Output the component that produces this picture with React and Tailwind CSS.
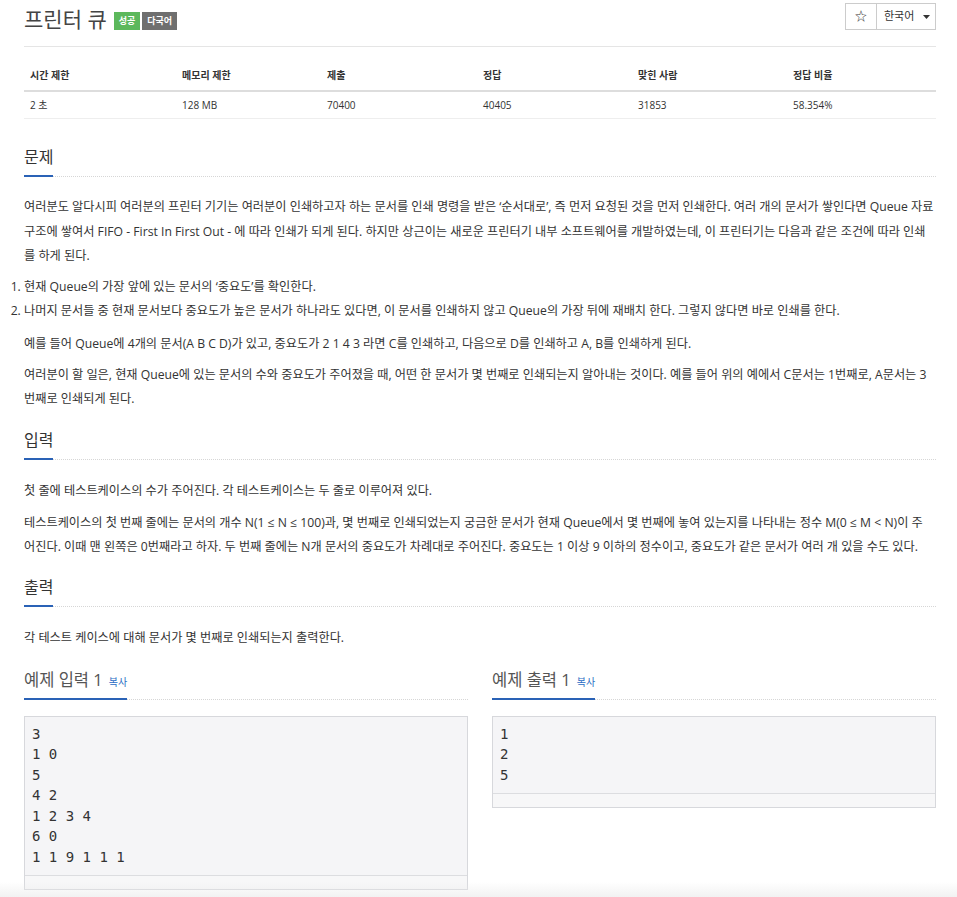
import React from "react";

const FONT = { fontFamily: '"Open Sans", "Noto Sans CJK KR", sans-serif' };

function SectionHeader({ children }) {
  return (
    <div className="flex items-end border-b border-dotted border-[#d6d6d6]">
      <div className="border-b-2 border-[#2a62b6] -mb-px pb-[6px] text-[16px] leading-[24px] text-[#333]">
        {children}
      </div>
    </div>
  );
}

function SampleHeader({ title }) {
  return (
    <div className="flex items-end border-b border-dotted border-[#d6d6d6]">
      <div className="border-b-2 border-[#2a62b6] -mb-px pb-[4px] text-[16.5px] leading-[24px] text-[#555] flex items-baseline">
        <span>{title}</span>
        <span className="ml-[6px] text-[10px] text-[#2a6cc4]">복사</span>
      </div>
    </div>
  );
}

function Pre({ lines }) {
  return (
    <div className="border border-[#d7d8dc] bg-[#f5f5f7]">
      <pre
        className="px-[7px] pt-[7px] pb-[8px] text-[14px] leading-[20.5px] text-[#333]"
        style={{ fontFamily: '"DejaVu Sans Mono", monospace' }}
      >
        {lines.join("\n")}
      </pre>
      <div className="h-[14px] border-t border-[#dcdde0] bg-[#f7f7f8]" />
    </div>
  );
}

export default function App() {
  const heads = ["시간 제한", "메모리 제한", "제출", "정답", "맞힌 사람", "정답 비율"];
  const vals = ["2 초", "128 MB", "70400", "40405", "31853", "58.354%"];
  const widths = ["w-[152px]", "w-[145px]", "w-[156px]", "w-[155px]", "w-[155px]", "flex-1"];
  return (
    <div className="min-h-[897px] bg-white relative" style={FONT}>
      <div className="mx-[24px] w-[912px] pb-[8px]">
        {/* Title */}
        <div className="flex items-start justify-between border-b border-[#e5e5e5] h-[47px]">
          <div className="flex items-center pt-[6px]">
            <span className="text-[21px] leading-[26px] text-[#444]">프린터 큐</span>
            <span className="ml-[7px] mt-[4px] bg-[#5cb85c] text-white text-[9px] font-bold px-[5px] h-[18px] flex items-center">
              성공
            </span>
            <span className="ml-[2px] mt-[4px] bg-[#6f6f6f] text-white text-[9px] font-bold px-[5px] h-[18px] flex items-center">
              다국어
            </span>
          </div>
          <div className="flex mt-[3px] h-[27px] border border-[#ccc] text-[11px] text-[#333]">
            <div className="w-[31px] flex items-center justify-center border-r border-[#ccc] text-[12px]">☆</div>
            <div className="w-[58px] flex items-center pl-[7px]">
              <span>한국어</span>
              <svg className="ml-[9px]" width="7" height="4" viewBox="0 0 7 4">
                <path d="M0 0h7L3.5 4z" fill="#333" />
              </svg>
            </div>
          </div>
        </div>

        {/* Table */}
        <div className="mt-[12px] text-[10px] text-[#333]">
          <div className="flex border-b-2 border-[#ddd] h-[33px] items-center font-bold pt-[2px]">
            {heads.map((h, i) => (
              <div key={i} className={`${widths[i]} pl-[6px]`}>{h}</div>
            ))}
          </div>
          <div className="flex h-[27px] items-center border-b border-[#eee] pt-[1px]">
            {vals.map((h, i) => (
              <div key={i} className={`${widths[i]} pl-[6px]`}>{h}</div>
            ))}
          </div>
        </div>

        {/* 문제 */}
        <div className="mt-[26px]">
          <SectionHeader>문제</SectionHeader>
        </div>
        <div className="mt-[18px] text-[12.2px] leading-[24.5px] text-[#333]">
          <p>
            여러분도 알다시피 여러분의 프린터 기기는 여러분이 인쇄하고자 하는 문서를 인쇄 명령을 받은 ‘순서대로’, 즉 먼저 요청된 것을 먼저 인쇄한다. 여러 개의 문서가 쌓인다면 Queue 자료구조에 쌓여서 FIFO - First In First Out - 에 따라 인쇄가 되게 된다. 하지만 상근이는 새로운 프린터기 내부 소프트웨어를 개발하였는데, 이 프린터기는 다음과 같은 조건에 따라 인쇄를 하게 된다.
          </p>
          <ol className="list-decimal list-outside mt-[6px] leading-[24px]">
            <li>현재 Queue의 가장 앞에 있는 문서의 ‘중요도’를 확인한다.</li>
            <li>나머지 문서들 중 현재 문서보다 중요도가 높은 문서가 하나라도 있다면, 이 문서를 인쇄하지 않고 Queue의 가장 뒤에 재배치 한다. 그렇지 않다면 바로 인쇄를 한다.</li>
          </ol>
          <p className="mt-[9px] leading-[24px]">
            예를 들어 Queue에 4개의 문서(A B C D)가 있고, 중요도가 2 1 4 3 라면 C를 인쇄하고, 다음으로 D를 인쇄하고 A, B를 인쇄하게 된다.
          </p>
          <p className="mt-[7px] leading-[24px]">
            여러분이 할 일은, 현재 Queue에 있는 문서의 수와 중요도가 주어졌을 때, 어떤 한 문서가 몇 번째로 인쇄되는지 알아내는 것이다. 예를 들어 위의 예에서 C문서는 1번째로, A문서는 3번째로 인쇄되게 된다.
          </p>
        </div>

        {/* 입력 */}
        <div className="mt-[17px]">
          <SectionHeader>입력</SectionHeader>
        </div>
        <div className="mt-[19px] text-[12.2px] leading-[24px] text-[#333]">
          <p>첫 줄에 테스트케이스의 수가 주어진다. 각 테스트케이스는 두 줄로 이루어져 있다.</p>
          <p className="mt-[8px] pr-[6px]">
            테스트케이스의 첫 번째 줄에는 문서의 개수 N(1 ≤ N ≤ 100)과, 몇 번째로 인쇄되었는지 궁금한 문서가 현재 Queue에서 몇 번째에 놓여 있는지를 나타내는 정수 M(0 ≤ M &lt; N)이 주어진다. 이때 맨 왼쪽은 0번째라고 하자. 두 번째 줄에는 N개 문서의 중요도가 차례대로 주어진다. 중요도는 1 이상 9 이하의 정수이고, 중요도가 같은 문서가 여러 개 있을 수도 있다.
          </p>
        </div>

        {/* 출력 */}
        <div className="mt-[16px]">
          <SectionHeader>출력</SectionHeader>
        </div>
        <div className="mt-[19px] text-[12.2px] leading-[24px] text-[#333]">
          <p>각 테스트 케이스에 대해 문서가 몇 번째로 인쇄되는지 출력한다.</p>
        </div>

        {/* Samples */}
        <div className="mt-[18px] grid grid-cols-2 gap-[24px] items-start">
          <div>
            <SampleHeader title="예제 입력 1" />
            <div className="mt-[16px]">
              <Pre lines={["3", "1 0", "5", "4 2", "1 2 3 4", "6 0", "1 1 9 1 1 1"]} />
            </div>
          </div>
          <div>
            <SampleHeader title="예제 출력 1" />
            <div className="mt-[16px]">
              <Pre lines={["1", "2", "5"]} />
            </div>
          </div>
        </div>
      </div>
      <div className="pointer-events-none absolute left-0 right-0 top-[882px] h-[15px] bg-gradient-to-b from-transparent to-[#e9e9e9]/60" />
    </div>
  );
}
